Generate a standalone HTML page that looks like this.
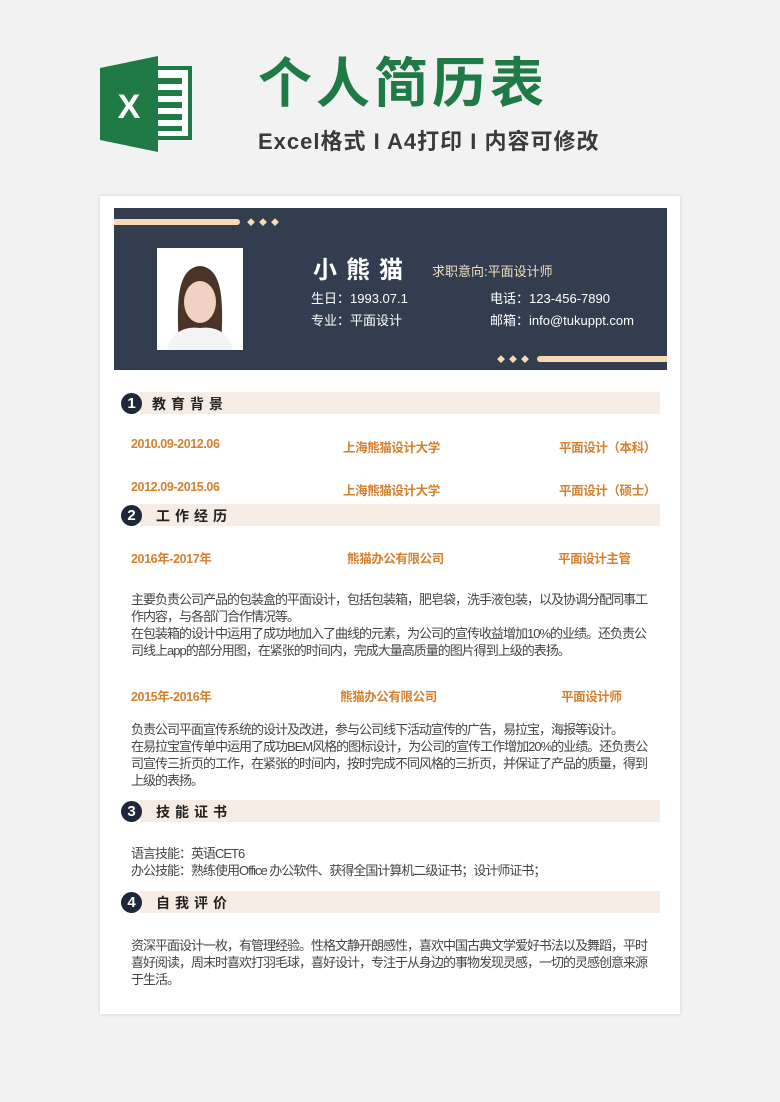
<!DOCTYPE html>
<html><head><meta charset="utf-8"><style>
*{margin:0;padding:0;box-sizing:border-box}
body{width:780px;height:1102px;background:#f2f2f2;position:relative;overflow:hidden;font-family:"Liberation Sans","Noto Sans CJK SC",sans-serif}
.a{position:absolute;white-space:nowrap}
.paper{position:absolute;left:100px;top:196px;width:580px;height:818px;background:#fff;box-shadow:0 0 4px rgba(0,0,0,.15)}
.hdr{position:absolute;left:114px;top:208px;width:553px;height:162px;background:#323d4f}
.or{color:#d5802f;font-size:12.5px;font-weight:bold;letter-spacing:-0.4px}
.txt{color:#444;font-size:13px;line-height:17px;position:absolute;left:131px;white-space:nowrap;letter-spacing:-1px}
.bar{position:absolute;left:140px;width:520px;height:22px;background:#f7ece3}
.num{position:absolute;left:121px;width:21px;height:21px;border-radius:50%;background:#1e2838;color:#fff;font-weight:bold;font-size:15px;text-align:center;line-height:21px}
.st{position:absolute;left:152px;font-size:14px;font-weight:bold;color:#222;letter-spacing:5px}
.w{color:#fff;font-size:13px}
</style></head><body>
<svg class="a" style="left:100px;top:56px" width="96" height="96" viewBox="0 0 96 96">
<rect x="40" y="12" width="50" height="70" fill="#fff" stroke="#1f7a45" stroke-width="4"/>
<g fill="#1f7a45"><rect x="50" y="22" width="32" height="6"/><rect x="50" y="34" width="32" height="6"/><rect x="50" y="46" width="32" height="6"/><rect x="50" y="58" width="32" height="6"/><rect x="50" y="70" width="32" height="5"/></g>
<polygon points="0,12 58,0 58,96 0,84" fill="#1f7a45"/>
<text x="29" y="62" fill="#fff" font-size="34" font-weight="bold" text-anchor="middle" font-family="Liberation Sans">X</text>
</svg>
<div class="a" style="left:258px;top:52px;font-size:54px;font-weight:bold;color:#1f7a45;letter-spacing:4px;line-height:64px">个人简历表</div>
<div class="a" style="left:258px;top:124px;font-size:22px;font-weight:bold;color:#3a3a3a;letter-spacing:1px">Excel格式 I A4打印 I 内容可修改</div>
<div class="paper"></div>
<div class="hdr"></div>
<div class="a" style="left:114px;top:219px;width:126px;height:6px;background:#f9d9b2;border-radius:0 3px 3px 0"></div>
<div class="a" style="left:247px;top:217px;color:#f9d9b2;font-size:8px;letter-spacing:4px">◆◆◆</div>
<div class="a" style="left:537px;top:356px;width:130px;height:6px;background:#f9d9b2;border-radius:3px 0 0 3px"></div>
<div class="a" style="left:497px;top:354px;color:#f9d9b2;font-size:8px;letter-spacing:4px">◆◆◆</div>
<svg class="a" style="left:157px;top:248px" width="86" height="102" viewBox="0 0 86 102"><rect width="86" height="102" fill="#fff"/><path d="M22 100 C20 60 18 20 43 18 C68 20 66 60 64 100Z" fill="#4a3428"/><ellipse cx="43" cy="54" rx="16" ry="21" fill="#f1d2c2"/><path d="M10 102 C14 84 28 78 43 80 C58 78 72 84 76 102Z" fill="#f3f3f3"/></svg>
<div class="a" style="left:313px;top:250px;font-size:24px;font-weight:bold;color:#fff;letter-spacing:9px">小熊猫</div>
<div class="a" style="left:432px;top:261px;font-size:13px;color:#f4dcc0">求职意向:平面设计师</div>
<div class="a w" style="left:311px;top:288px">生日：1993.07.1</div>
<div class="a w" style="left:490px;top:288px">电话：123-456-7890</div>
<div class="a w" style="left:311px;top:310px">专业：平面设计</div>
<div class="a w" style="left:490px;top:310px">邮箱：info@tukuppt.com</div>

<div class="bar" style="top:392px"></div><div class="num" style="top:393px">1</div><div class="st" style="top:394px">教育背景</div>
<div class="a or" style="left:131px;top:437px">2010.09-2012.06</div><div class="a or" style="left:343px;top:437px">上海熊猫设计大学</div><div class="a or" style="left:559px;top:437px">平面设计（本科）</div>
<div class="a or" style="left:131px;top:480px">2012.09-2015.06</div><div class="a or" style="left:343px;top:480px">上海熊猫设计大学</div><div class="a or" style="left:559px;top:480px">平面设计（硕士）</div>

<div class="bar" style="top:504px"></div><div class="num" style="top:505px">2</div><div class="st" style="left:156px;top:506px">工作经历</div>
<div class="a or" style="left:131px;top:548px">2016年-2017年</div><div class="a or" style="left:347px;top:548px">熊猫办公有限公司</div><div class="a or" style="left:558px;top:548px">平面设计主管</div>
<div class="txt" style="top:591px">主要负责公司产品的包装盒的平面设计，包括包装箱，肥皂袋，洗手液包装，以及协调分配同事工<br>作内容，与各部门合作情况等。<br>在包装箱的设计中运用了成功地加入了曲线的元素，为公司的宣传收益增加10%的业绩。还负责公<br>司线上app的部分用图，在紧张的时间内，完成大量高质量的图片得到上级的表扬。</div>
<div class="a or" style="left:131px;top:686px">2015年-2016年</div><div class="a or" style="left:340px;top:686px">熊猫办公有限公司</div><div class="a or" style="left:561px;top:686px">平面设计师</div>
<div class="txt" style="top:721px">负责公司平面宣传系统的设计及改进，参与公司线下活动宣传的广告，易拉宝，海报等设计。<br>在易拉宝宣传单中运用了成功BEM风格的图标设计，为公司的宣传工作增加20%的业绩。还负责公<br>司宣传三折页的工作，在紧张的时间内，按时完成不同风格的三折页，并保证了产品的质量，得到<br>上级的表扬。</div>

<div class="bar" style="top:800px"></div><div class="num" style="top:801px">3</div><div class="st" style="left:156px;top:802px">技能证书</div>
<div class="txt" style="top:845px">语言技能：英语CET6<br>办公技能：熟练使用Office 办公软件、获得全国计算机二级证书；设计师证书；</div>

<div class="bar" style="top:891px"></div><div class="num" style="top:892px">4</div><div class="st" style="left:156px;top:893px">自我评价</div>
<div class="txt" style="top:937px">资深平面设计一枚，有管理经验。性格文静开朗感性，喜欢中国古典文学爱好书法以及舞蹈，平时<br>喜好阅读，周末时喜欢打羽毛球，喜好设计，专注于从身边的事物发现灵感，一切的灵感创意来源<br>于生活。</div>
</body></html>
